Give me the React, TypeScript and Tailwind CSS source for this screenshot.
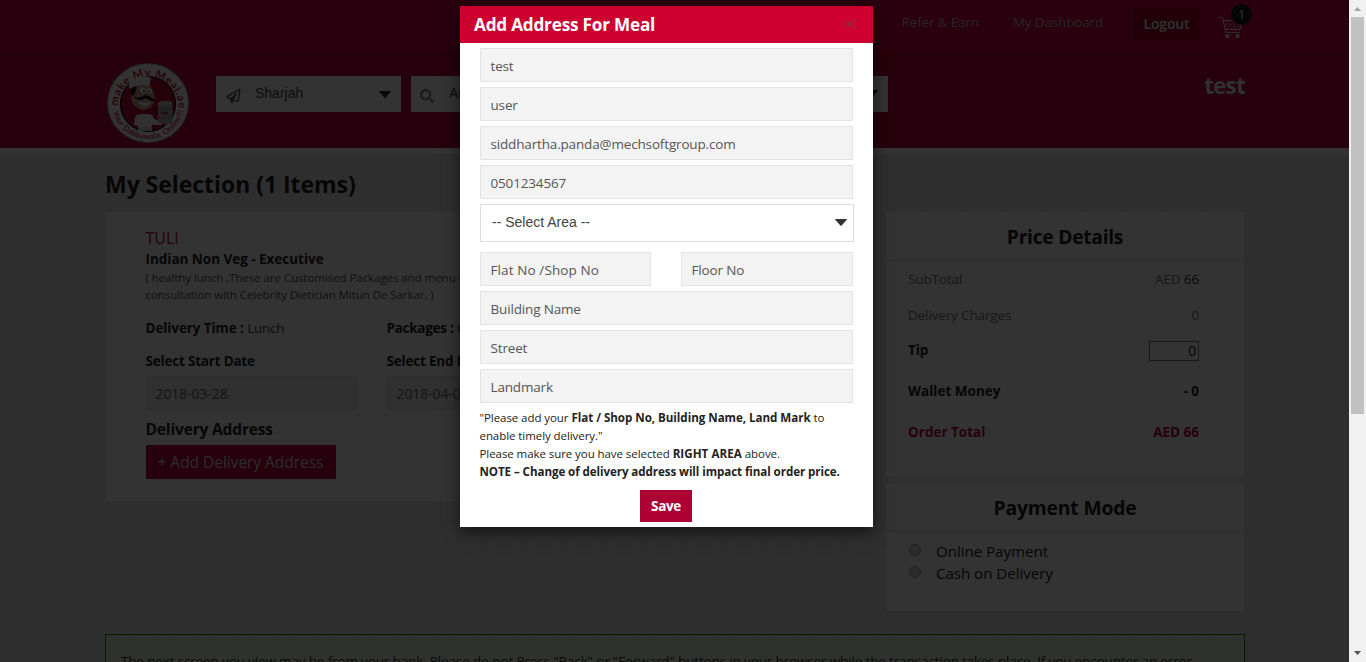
import type { ReactNode } from 'react';
import { FaRegPaperPlane, FaSearch } from 'react-icons/fa';

function Caret({ className }: { className: string }) {
  return (
    <svg viewBox="0 0 12 7" className={`h-[7px] w-3 shrink-0 ${className}`}>
      <path d="M0 0.6Q0 0 0.8 0H11.2Q12 0 12 0.6L6.6 6.6Q6 7.2 5.4 6.6Z" fill="currentColor" />
    </svg>
  );
}

function Logo() {
  return (
    <svg viewBox="0 0 84 84" className="h-[84px] w-[84px]">
      <defs>
        <path id="logo-top" d="M11.5 46A30.5 30.5 0 1 1 72.5 46" />
        <path id="logo-bottom" d="M5.8 42A36.2 36.2 0 0 0 78.2 42" />
      </defs>
      <ellipse cx="42" cy="42" rx="40.5" ry="39.5" fill="#fff" stroke="#999" strokeWidth="1.2" />
      <circle cx="42" cy="43" r="27.5" fill="#ad0035" stroke="#111" strokeWidth="1.2" />
      <text className="fill-[#d0103c] font-['Lato'] text-[11px] font-bold">
        <textPath href="#logo-top" startOffset="1" textLength="96">make My Meal.ae</textPath>
      </text>
      <text className="fill-[#d0103c] font-['Lato'] text-[8px] font-semibold">
        <textPath href="#logo-bottom" startOffset="9" textLength="97">Your Dabbawala, Online!!!</textPath>
      </text>
      <path d="M24 28Q20 18 29 17Q38 13 45 17L43 27Q33 22 24 28Z" fill="#f2f2f2" />
      <path d="M27 27Q35 21 45 26Q50 33 48 41Q45 49 37 49Q27 47 25 38Z" fill="#cfa27c" />
      <path d="M25 27L31 25Q30 32 27 35Q24 31 25 27Z" fill="#111" />
      <ellipse cx="37" cy="29.500" rx="3" ry="2.700" fill="#fff" />
      <ellipse cx="43.500" cy="30" rx="2.700" ry="2.500" fill="#fff" />
      <circle cx="38" cy="30" r="1" fill="#111" />
      <circle cx="43" cy="30.500" r="1" fill="#111" />
      <path d="M27 35Q31 39 39 34Q45 35 49 40Q44 41 40 37Q32 42 27 35Z" fill="#111" />
      <path d="M32 40Q39 44 45 40Q43 45 38 45Q34 44 32 40Z" fill="#fff" />
      <path d="M29 56Q31 53 36 53H42Q47 53 48 58L56 60V64L46 64L44 70H33L32 65L28 64Z" fill="#f2f2f2" />
      <path d="M54 62Q59 58 65 60L60 64Z" fill="#cfa27c" />
      <path d="M32 70V66H46V70Z" fill="#ddd" />
      <path d="M53 43Q60 35 66 43" fill="none" stroke="#888" strokeWidth="0.8" />
      <rect x="52" y="41" width="14.500" height="21" rx="2" fill="#a9adb0" />
      <ellipse cx="59.200" cy="42" rx="7.200" ry="2" fill="#c8cccc" />
      <path d="M52 48H66.500M52 57H66.500" stroke="#777" strokeWidth="0.8" />
      <path d="M56 54Q57 49 59 53Q61 49 62 54" fill="none" stroke="#d0103c" strokeWidth="1.3" />
    </svg>
  );
}

function Cart() {
  return (
    <svg viewBox="0 0 26 26" className="h-[26px] w-[26px]">
      <g fill="none" stroke="#dcdcdc" strokeWidth="1.2">
        <path d="M0 3.500H4.500L8 18.500H22M5.100 6.500H24L22 15.500H7.300" />
        <path d="M7 11.500L12 6.500M8.500 15.500L16.500 6.500M12.500 15.500L20.500 6.500M16.500 15.500L23.500 8M20.500 15.500L22.500 12.500" strokeWidth="0.9" />
      </g>
      <rect x="7.500" y="20" width="4" height="4" rx="1.300" fill="#dcdcdc" />
      <rect x="17.500" y="20" width="4" height="4" rx="1.300" fill="#dcdcdc" />
    </svg>
  );
}

function PageHeader() {
  return (
    <header className="h-[148px] bg-[#be003c]">
      <div className="flex h-[51px] items-start justify-end bg-[#d2004b] pr-[105px] text-[13.500px] leading-5 tracking-[-0.012em] text-[#bdbdbd]">
        <span className="mt-3 mr-[34px]">Refer &amp; Earn</span>
        <span className="mt-3 mr-[30px]">My Dashboard</span>
        <span className="mt-2 mr-[18px] flex h-8 w-[67px] items-center justify-center bg-[#aa0030] text-[14px] font-semibold text-[#f0f0f0]">Logout</span>
        <span className="relative mt-[14px] h-[26px] w-[26px]">
          <Cart />
          <span className="absolute -top-[10px] left-[13px] flex h-[21px] w-[21px] items-center justify-center rounded-full bg-[#1c1c1c] text-xs text-white">1</span>
        </span>
      </div>
      <div className="flex items-start pt-[10px] pr-[104px] pl-[106px]">
        <Logo />
        <div className="mt-[15px] ml-[26px] flex h-9 w-[185px] items-center bg-white pr-[10px] pb-[2px] pl-[10px] font-['Liberation_Sans'] text-[14px] text-[#444]">
          <FaRegPaperPlane className="mt-[6px] mr-[14px] h-[14px] w-[15px]" />
          <span className="grow">Sharjah</span>
          <Caret className="mt-[2px] text-[#222]" />
        </div>
        <div className="mt-[15px] ml-[10px] flex h-9 w-[477px] items-center bg-white pr-[10px] pb-[2px] pl-[9px] font-['Liberation_Sans'] text-[14px] text-[#444]">
          <FaSearch className="mt-[6px] mr-[15px] h-[14px] w-[14px] text-[#888]" />
          <span className="grow">Area</span>
          <Caret className="text-[#222]" />
        </div>
        <h2 className="mt-[9px] ml-auto text-[22.500px] leading-8 font-bold tracking-[-0.035em] text-[#eee]">test</h2>
      </div>
    </header>
  );
}

function DateField({ label, value }: { label: string; value: string }) {
  return (
    <div className="w-[241px]">
      <div className="h-[25px] text-[13.500px] leading-5 font-bold tracking-[-0.015em]">{label}</div>
      <div className="flex h-[34px] w-[211px] items-center border border-[#e6e6e6] bg-[#f0f0f0] px-[9px] text-[14px] tracking-[-0.007em] text-[#666]">{value}</div>
    </div>
  );
}

function SelectionCard() {
  return (
    <section className="h-[291px] w-[765px] border border-[#e3e3e3] bg-white pt-4 pl-[39.500px] text-[#222]">
      <div className="text-[16px] leading-[21px] text-[#be003c]">TULI</div>
      <div className="text-[13.500px] leading-5 font-bold tracking-[-0.002em]">Indian Non Veg - Executive</div>
      <p className="text-[11.600px] leading-[17px] tracking-[-0.009em] text-[#555]">
        ( healthy lunch ,These are Customised Packages and menu will be made in
        <br />
        consultation with Celebrity Dietician Mitun De Sarkar. )
      </p>
      <div className="mt-[14px] flex text-[13.500px] leading-[22px]">
        <div className="w-[241px]"><b className="tracking-[-0.007em]">Delivery Time :</b> <span className="tracking-[-0.02em] text-[#444]">Lunch</span></div>
        <div><b className="tracking-[-0.02em]">Packages :</b> Custom</div>
      </div>
      <div className="mt-3 flex">
        <DateField label="Select Start Date" value="2018-03-28" />
        <DateField label="Select End Date" value="2018-04-03" />
      </div>
      <h3 className="mt-[7px] text-[15.500px] leading-6 font-bold tracking-[-0.01em]">Delivery Address</h3>
      <button className="mt-[4px] flex h-[34px] w-[190px] items-center justify-center bg-[#be003c] pt-[2px] text-[15.600px] tracking-[-0.005em] text-[#ddd]">+ Add Delivery Address</button>
    </section>
  );
}

function PriceRow({ label, children, className }: { label: string; children: ReactNode; className: string }) {
  return (
    <div className={`flex items-center justify-between ${className}`}>
      <span>{label}</span>
      <span>{children}</span>
    </div>
  );
}

function Sidebar() {
  return (
    <aside className="w-[360px] text-[#222]">
      <section className="h-[267px] border border-[#e0e0e0] bg-white">
        <h3 className="flex h-[49px] items-center justify-center border-b border-[#ddd] pt-[2px] text-[19.300px] font-bold tracking-[-0.015em]">Price Details</h3>
        <div className="pr-[45px] pl-[22px] text-[13.500px] tracking-[-0.01em]">
          <PriceRow label="SubTotal" className="h-9 text-[#777]">AED <span className="text-[#333]">66</span></PriceRow>
          <PriceRow label="Delivery Charges" className="h-9 text-[#777]">0</PriceRow>
          <PriceRow label="Tip" className="h-[35px] font-bold">
            <span className="flex h-5 w-[50px] items-center justify-end border border-[#777] pr-[2px] text-[14px] font-normal">0</span>
          </PriceRow>
          <PriceRow label="Wallet Money" className="h-[46px] font-bold tracking-[0em]">- 0</PriceRow>
          <PriceRow label="Order Total" className="h-9 font-bold tracking-[0em] text-[#be003c]">AED 66</PriceRow>
        </div>
      </section>
      <section className="mt-[4px] h-[131px] border border-b-2 border-[#e0e0e0] bg-white">
        <h3 className="flex h-[49px] items-center justify-center border-b border-[#ddd] pt-[2px] text-[19.300px] font-bold tracking-[-0.007em]">Payment Mode</h3>
        <div className="mt-[8px] pl-[23px] text-[15.200px] leading-[22px] tracking-[-0.005em]">
          {['Online Payment', 'Cash on Delivery'].map((mode) => (
            <label key={mode} className="flex">
              <span className="mt-[4px] mr-[15px] h-3 w-3 rounded-full border border-[#999] bg-[#ddd]" />
              {mode}
            </label>
          ))}
        </div>
      </section>
    </aside>
  );
}

function Page() {
  return (
    <div className="h-full overflow-hidden bg-[#ebebeb]">
      <PageHeader />
      <div className="h-[6px] bg-white" />
      <main className="h-[508px] overflow-hidden bg-[repeating-linear-gradient(90deg,#e6e6e6_0px,#e6e6e6_3px,#ebebeb_3px,#ebebeb_5px)] px-[105px] pt-[10px]">
        <h1 className="h-[47px] text-[23px] leading-[40px] font-bold tracking-[-0.002em] text-[#222]">My Selection (1 Items)</h1>
        <div className="flex w-[1140px] justify-between">
          <SelectionCard />
          <Sidebar />
        </div>
        <div className="mt-[21px] h-20 w-[1140px] border border-[#2f8000] bg-[#ebf3e0] pt-4 pl-[15px] text-[13.500px] leading-5 tracking-[-0.011em] whitespace-nowrap text-[#333]">
          The next screen you view may be from your bank. Please do not Press "Back" or "Forward" buttons in your browser while the transaction takes place. If you encounter an error
        </div>
      </main>
    </div>
  );
}

function Field({ value, className = '' }: { value: string; className?: string }) {
  return (
    <div className={`flex h-[34px] items-center border border-[#e3e3e3] bg-[#f3f3f3] pl-[9.500px] pt-[2px] text-[13.500px] tracking-[-0.012em] text-[#555] ${className}`}>
      {value}
    </div>
  );
}

function AddressModal() {
  return (
    <div className="absolute top-[6px] left-[460px] h-[521px] w-[413px] bg-white shadow-[0_5px_15px_rgba(0,0,0,0.6)]">
      <div className="flex h-[37px] items-center justify-between bg-[#ce002f] pr-[17px] pl-[14px]">
        <h2 className="text-[17.200px] font-bold tracking-[-0.013em] text-white">Add Address For Meal</h2>
        <svg viewBox="0 0 12 10" className="mb-[2px] h-[10px] w-3">
          <path d="M1.500 1L10.500 9M10.500 1L1.500 9" stroke="#8f2c44" strokeWidth="1.500" />
        </svg>
      </div>
      <div className="flex flex-col gap-[5px] px-5 pt-[5px]">
        <Field value="test" />
        <Field value="user" />
        <Field value="siddhartha.panda@mechsoftgroup.com" />
        <Field value="0501234567" />
        <div className="mb-[5px] flex h-[38px] w-[374px] items-center justify-between border border-[#ddd] bg-white pr-[6px] pb-[2px] pl-[11px] font-['Liberation_Sans'] text-[14px] text-[#444]">
          -- Select Area --
          <Caret className="text-[#333]" />
        </div>
        <div className="flex justify-between">
          <Field value="Flat No /Shop No" className="w-[171px] tracking-[0.008em]" />
          <Field value="Floor No" className="w-[172px]" />
        </div>
        <Field value="Building Name" />
        <Field value="Street" />
        <Field value="Landmark" />
      </div>
      <p className="mt-[6px] pl-[19.500px] text-[11.500px] leading-[18px] tracking-[-0.006em] whitespace-nowrap text-[#222]">
        "Please add your <b className="text-[11.600px] tracking-[-0.003em]">Flat / Shop No, Building Name, Land Mark</b> to
        <br />
        enable timely delivery."
        <br />
        Please make sure you have selected <b className="text-[11.600px] tracking-[0.005em]">RIGHT AREA</b> above.
        <br />
        <b className="text-[11.600px] tracking-[-0.007em]">NOTE – Change of delivery address will impact final order price.</b>
      </p>
      <button className="mt-[9px] ml-[180px] flex h-8 w-[52px] items-center justify-center bg-[#ad0035] text-[13.500px] font-bold tracking-[-0.025em] text-white">Save</button>
    </div>
  );
}

function Scrollbar() {
  return (
    <div className="flex w-[17px] flex-col items-center bg-[#f1f1f1]">
      <svg viewBox="0 0 7 4" className="mt-[7px] h-1 w-[7px]"><path d="M0 4L3.500 0L7 4Z" fill="#a3a3a3" /></svg>
      <div className="mt-[6px] h-[397px] w-[13px] bg-[#c1c1c1]" />
      <svg viewBox="0 0 7 4" className="mt-auto mb-[7px] h-1 w-[7px]"><path d="M0 0L3.500 4L7 0Z" fill="#505050" /></svg>
    </div>
  );
}

export default function App() {
  return (
    <div className="flex h-[662px] w-[1366px] overflow-hidden font-['Open_Sans','Noto_Sans',sans-serif]">
      <div className="relative w-[1349px] overflow-hidden">
        <Page />
        <div className="absolute inset-0 bg-black/80" />
        <AddressModal />
      </div>
      <Scrollbar />
    </div>
  );
}
